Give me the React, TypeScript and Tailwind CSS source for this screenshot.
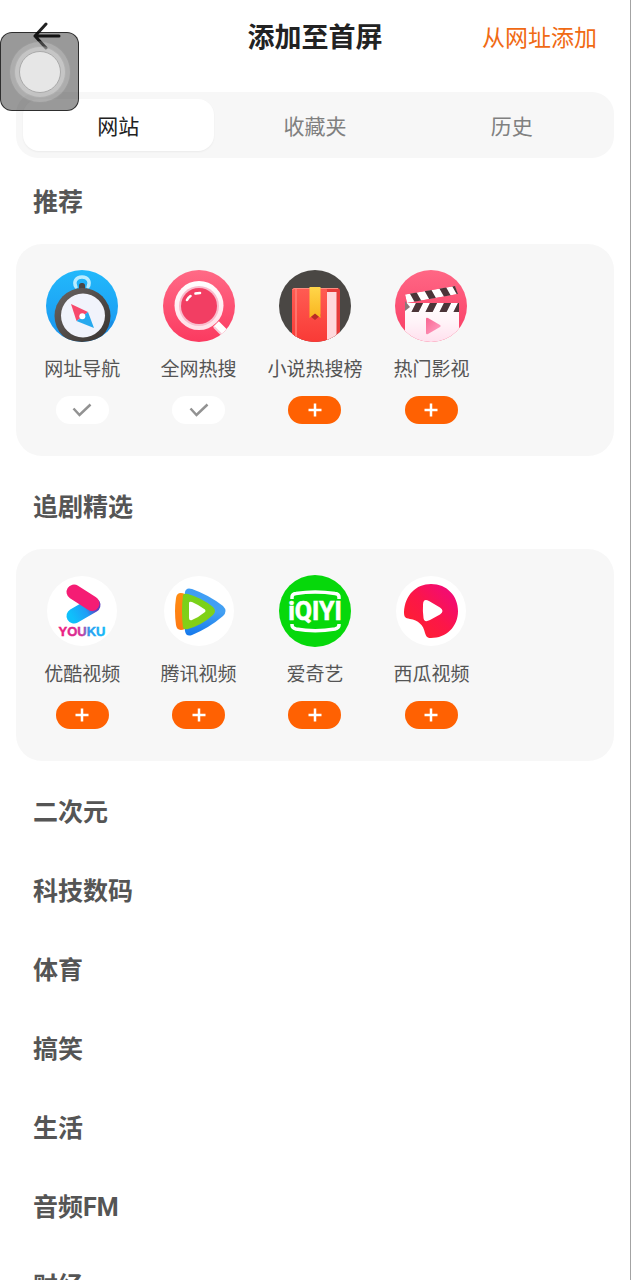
import { useState, type ReactNode } from "react";

function CompassIcon() {
  return (
    <svg viewBox="0 0 72 72" className="size-full" aria-hidden="true">
      <defs>
        <linearGradient id="compass-sky" x1="0" y1="0" x2="0" y2="1">
          <stop offset="0" stopColor="#22b9fb" />
          <stop offset="1" stopColor="#1a94f0" />
        </linearGradient>
        <linearGradient id="compass-rim" x1="0" y1="0" x2="1" y2="1">
          <stop offset="0" stopColor="#6a6462" />
          <stop offset="1" stopColor="#37322f" />
        </linearGradient>
      </defs>
      <rect width="72" height="72" fill="url(#compass-sky)" />
      <path d="M52 66L66 50L72 58V72H50Z" fill="#157fd8" opacity=".5" />
      <path d="M30 17C27 12 30 7 36 7S45 12 42 17" fill="none" stroke="#b9ecff" strokeWidth="3.4" strokeLinecap="round" />
      <rect x="33" y="13" width="6" height="8" rx="2.5" fill="#4b4644" />
      <circle cx="36.5" cy="46" r="28" fill="url(#compass-rim)" />
      <circle cx="37" cy="45.5" r="22" fill="#f1f3fb" />
      <path d="M25 34L42 42L36.500 46.500L30.500 51Z" fill="#f7496c" />
      <path d="M48 58L42 42L36.500 46.500L30.500 51Z" fill="#27a9ee" />
      <circle cx="36.300" cy="46.300" r="3" fill="#fff" />
    </svg>
  );
}

function MagnifierIcon() {
  return (
    <svg viewBox="0 0 72 72" className="size-full" aria-hidden="true">
      <defs>
        <linearGradient id="lens-back" x1="0" y1="0" x2="0" y2="1">
          <stop offset="0" stopColor="#ff6a86" />
          <stop offset="1" stopColor="#fb3a60" />
        </linearGradient>
        <linearGradient id="lens-rim" x1="0" y1="0" x2="0" y2="1">
          <stop offset="0" stopColor="#fff" />
          <stop offset="1" stopColor="#ffdfe8" />
        </linearGradient>
      </defs>
      <rect width="72" height="72" fill="url(#lens-back)" />
      <path d="M53 54L65 66" stroke="#fff" strokeWidth="8" />
      <path d="M51 57L60 66" stroke="#f8cbd8" strokeWidth="2" />
      <circle cx="36" cy="35.500" r="24.500" fill="url(#lens-rim)" />
      <circle cx="36" cy="36" r="20" fill="#f9bccd" />
      <circle cx="36" cy="36" r="18" fill="#f23e63" />
      <path d="M24 30C25 28 26 27 27.500 26M32.500 23.500C34 23 35.500 23 37 23" fill="none" stroke="#fff" strokeWidth="2.600" strokeLinecap="round" />
    </svg>
  );
}

function BookIcon() {
  return (
    <svg viewBox="0 0 72 72" className="size-full" aria-hidden="true">
      <defs>
        <linearGradient id="book-cover" x1="0" y1="0" x2="0" y2="1">
          <stop offset="0" stopColor="#ff5c53" />
          <stop offset="1" stopColor="#f93a36" />
        </linearGradient>
        <linearGradient id="book-mark" x1="0" y1="0" x2="0" y2="1">
          <stop offset="0" stopColor="#ffd64a" />
          <stop offset="1" stopColor="#f9b51f" />
        </linearGradient>
      </defs>
      <rect width="72" height="72" fill="#4a4744" />
      <rect x="13" y="18" width="48" height="60" rx="3" fill="#e63c3a" />
      <rect x="48" y="22" width="9.500" height="52" fill="#ffd9dc" />
      <path d="M16 18H46Q48 18 48 20V72H13V21Q13 18 16 18Z" fill="url(#book-cover)" />
      <path d="M17 19V72" stroke="#ff8279" strokeWidth="1.500" />
      <path d="M13.500 20Q14 18.500 16 18.500H59" fill="none" stroke="#ff8c80" />
      <path d="M31 46L36 50L42 45L37 42Z" fill="#b92c25" />
      <path d="M30.500 17H41.500V48L36 43.500L30.500 48Z" fill="url(#book-mark)" />
    </svg>
  );
}

function ClapperIcon() {
  return (
    <svg viewBox="0 0 72 72" className="size-full" aria-hidden="true">
      <defs>
        <linearGradient id="clap-back" x1="0" y1="0" x2="0" y2="1">
          <stop offset="0" stopColor="#ff6785" />
          <stop offset="1" stopColor="#f93c63" />
        </linearGradient>
        <linearGradient id="clap-board" x1="0" y1="0" x2="0" y2="1">
          <stop offset="0" stopColor="#fff" />
          <stop offset=".5" stopColor="#fff3f8" />
          <stop offset="1" stopColor="#ffe0ee" />
        </linearGradient>
        <linearGradient id="clap-play" x1="0" y1="0" x2="1" y2="1">
          <stop offset="0" stopColor="#f96591" />
          <stop offset="1" stopColor="#ffa2c5" />
        </linearGradient>
        <clipPath id="clap-arm"><path d="M10 24.500L60 16L63 24L12 33Z" /></clipPath>
        <clipPath id="clap-strip"><path d="M10 33H64V42H10Z" /></clipPath>
      </defs>
      <rect width="72" height="72" fill="url(#clap-back)" />
      <path d="M10 33H64V72H10Z" fill="url(#clap-board)" />
      <g clipPath="url(#clap-arm)">
        <path d="M10 24.500L60 16L63 24L12 33Z" fill="#fff" />
        <path d="M16 19L25 35M30.500 16L39.500 32M45 13L54 29M58 11L67 27" stroke="#4b3438" strokeWidth="6.500" />
      </g>
      <g clipPath="url(#clap-strip)">
        <path d="M18 46L26 30M32 46L40 30M46 46L54 30M60 46L68 30" stroke="#4b3438" strokeWidth="6.500" />
      </g>
      <path d="M10 34V31L15 37L10 41Z" fill="#8b7779" />
      <path d="M31 49Q31 47 33 48L45 55Q46.500 56 45 57L33 64Q31 65 31 63Z" fill="url(#clap-play)" />
    </svg>
  );
}

function YoukuIcon() {
  return (
    <svg viewBox="0 0 72 72" className="size-full" aria-hidden="true">
      <defs>
        <linearGradient id="youku-blue" gradientUnits="userSpaceOnUse" x1="26" y1="42" x2="48" y2="30">
          <stop offset="0" stopColor="#0fc0fb" />
          <stop offset=".6" stopColor="#1f9df5" />
          <stop offset="1" stopColor="#5b3fc0" />
        </linearGradient>
        <linearGradient id="youku-word" x1="0" y1="0" x2="1" y2="0">
          <stop offset="0" stopColor="#f01c7d" />
          <stop offset=".5" stopColor="#d0339c" />
          <stop offset=".66" stopColor="#2b9df0" />
          <stop offset="1" stopColor="#14b8f7" />
        </linearGradient>
      </defs>
      <circle cx="36" cy="36" r="35" fill="#fff" />
      <path d="M28 41L47 30" stroke="url(#youku-blue)" strokeWidth="15" strokeLinecap="round" />
      <path d="M28 17L46 28.500" stroke="#f51c74" strokeWidth="15" strokeLinecap="round" />
      <text x="36" y="61" textAnchor="middle" fontFamily="'Liberation Sans', sans-serif" fontWeight="700" fontSize="13" fill="url(#youku-word)" stroke="url(#youku-word)" strokeWidth=".4">YOUKU</text>
    </svg>
  );
}

function TencentIcon() {
  return (
    <svg viewBox="0 0 72 72" className="size-full" aria-hidden="true">
      <defs>
        <linearGradient id="tx-blue" x1="0" y1="0" x2="0" y2="1">
          <stop offset="0" stopColor="#3f9df5" />
          <stop offset=".5" stopColor="#43a0f2" />
          <stop offset="1" stopColor="#1478ec" />
        </linearGradient>
        <linearGradient id="tx-green" x1="0" y1="0" x2="0" y2="1">
          <stop offset="0" stopColor="#76d21b" />
          <stop offset="1" stopColor="#86cf16" />
        </linearGradient>
        <linearGradient id="tx-orange" x1="0" y1="0" x2="0" y2="1">
          <stop offset="0" stopColor="#ff8d12" />
          <stop offset="1" stopColor="#ff7912" />
        </linearGradient>
      </defs>
      <circle cx="36" cy="36" r="35" fill="#fff" />
      <path d="M22 17Q23 12 29 14Q46 20 60 31Q65 36 60 41Q46 53 29 60Q23 62 22 56Q19 36 22 17Z" fill="url(#tx-blue)" />
      <path d="M22 19Q14 16 13 23Q11 36 13 50Q14 57 22 54Z" fill="url(#tx-orange)" />
      <path d="M20 20Q22 18 25 19Q39 23 50 32Q54 36 50 40Q39 50 25 54Q22 55 20 53Q18 36 20 20Z" fill="url(#tx-green)" />
      <path d="M26 28Q26 26 29 27Q36 30 42 34.500Q43 36 42 37Q36 42 29 45Q26 46 26 43Z" fill="#fff" />
    </svg>
  );
}

function IqiyiIcon() {
  return (
    <svg viewBox="0 0 72 72" className="size-full" aria-hidden="true">
      <rect width="72" height="72" fill="#06d80b" />
      <path d="M13 24V22Q13 19 17 18.500Q36 15.500 56 18.500Q60 19 60 22V24M13 49V50Q13 53 17 54Q36 57.500 56 54Q60 53 60 50V49" fill="none" stroke="#fff" strokeWidth="3.500" />
      <text x="36" y="45" textAnchor="middle" fontFamily="Roboto, sans-serif" fontWeight="700" fontSize="25" fill="#fff" stroke="#fff" strokeWidth=".6">iQIYI</text>
    </svg>
  );
}

function XiguaIcon() {
  return (
    <svg viewBox="0 0 72 72" className="size-full" aria-hidden="true">
      <defs>
        <linearGradient id="xigua" x1="0" y1="1" x2="1" y2="0">
          <stop offset="0" stopColor="#ff2328" />
          <stop offset=".5" stopColor="#fc1648" />
          <stop offset="1" stopColor="#ee0785" />
        </linearGradient>
      </defs>
      <circle cx="36" cy="36" r="35" fill="#fff" />
      <path d="M9 37C10 20 21 9 36 9C52 9 63 21 63 36C63 52 51 63 36 63C32 63 31 61 30 58C28.500 50 23 45 15 44C10 43 9 42 9 37Z" fill="url(#xigua)" />
      <path d="M28 30Q28 23 34 26L45 32.500Q50 36 45 39.500L35 45Q29 48 28.500 43Q27.500 36 28 30Z" fill="#fff" />
    </svg>
  );
}

type Site = { name: string; icon: ReactNode; added?: boolean };

const recommended: Site[] = [
  { name: "网址导航", icon: <CompassIcon />, added: true },
  { name: "全网热搜", icon: <MagnifierIcon />, added: true },
  { name: "小说热搜榜", icon: <BookIcon /> },
  { name: "热门影视", icon: <ClapperIcon /> },
];

const shows: Site[] = [
  { name: "优酷视频", icon: <YoukuIcon /> },
  { name: "腾讯视频", icon: <TencentIcon /> },
  { name: "爱奇艺", icon: <IqiyiIcon /> },
  { name: "西瓜视频", icon: <XiguaIcon /> },
];

const categories = ["二次元", "科技数码", "体育", "搞笑", "生活", "音频FM", "财经"];
const tabs = ["网站", "收藏夹", "历史"];

function SiteItem({ site }: { site: Site }) {
  const [added, setAdded] = useState(Boolean(site.added));
  return (
    <li className="flex flex-col items-center">
      <div className="size-18 overflow-hidden rounded-full">{site.icon}</div>
      <span className="mt-3 text-[19px] leading-7 whitespace-nowrap text-[#555]">{site.name}</span>
      <button
        type="button"
        aria-label={added ? `移除${site.name}` : `添加${site.name}`}
        onClick={() => setAdded(!added)}
        className={`mt-3.5 flex h-7 w-[53px] items-center justify-center rounded-full ${added ? "bg-white text-[#929292]" : "bg-[#ff6102] text-white"}`}
      >
        <svg viewBox="0 0 20 20" className="size-5" fill="none" stroke="currentColor" strokeWidth="2.500" aria-hidden="true">
          {added ? <path d="M1.500 8.500L7.500 15L18.500 4.500" /> : <path d="M3.500 10H16.500M10 3.500V16.500" />}
        </svg>
      </button>
    </li>
  );
}

function SectionTitle({ children }: { children: ReactNode }) {
  return (
    <h2 className="flex h-[79px] items-center pt-0.5 pl-[33px] font-[Roboto,'Noto_Sans_CJK_SC',sans-serif] text-[25px] font-bold text-[#555]">
      {children}
    </h2>
  );
}

function SiteSection({ title, sites }: { title: string; sites: Site[] }) {
  return (
    <section className="pb-[11px]">
      <SectionTitle>{title}</SectionTitle>
      <ul className="mx-4 mt-[3px] grid grid-cols-5 rounded-[26px] bg-[#f7f7f7] px-2 pt-[26px] pb-8">
        {sites.map((site) => (
          <SiteItem key={site.name} site={site} />
        ))}
      </ul>
    </section>
  );
}

export default function App() {
  const [tab, setTab] = useState("网站");
  return (
    <div className="relative flex h-dvh flex-col border-r border-[#a3a3a3] bg-white font-['Noto_Sans_CJK_SC',sans-serif]">
      <header className="grid h-18 shrink-0 grid-cols-3 items-center px-[33px]">
        <button type="button" aria-label="返回" className="w-7 text-[#222]">
          <svg viewBox="0 0 28 28" className="size-7" fill="none" stroke="currentColor" strokeWidth="3" strokeLinecap="round" strokeLinejoin="round" aria-hidden="true">
            <path d="M13 2L2 14L13 26M2 14H26" />
          </svg>
        </button>
        <h1 className="text-center text-[27px] font-bold whitespace-nowrap text-[#222]">添加至首屏</h1>
        <a href="#add" className="justify-self-end text-[23px] whitespace-nowrap text-[#f06a14]">从网址添加</a>
      </header>

      <div role="tablist" className="mx-4 mt-5 mb-1 grid h-[66px] shrink-0 grid-cols-3 gap-1.5 rounded-[22px] bg-[#f7f7f7] p-[7px]">
        {tabs.map((name) => (
          <button
            key={name}
            type="button"
            role="tab"
            aria-selected={tab === name}
            onClick={() => setTab(name)}
            className={`rounded-2xl pt-0.5 text-[21px] ${tab === name ? "bg-white text-[#222] shadow-xs" : "text-[#808080]"}`}
          >
            {name}
          </button>
        ))}
      </div>

      <main className="min-h-0 flex-1 overflow-y-auto [scrollbar-width:none]">
        <SiteSection title="推荐" sites={recommended} />
        <SiteSection title="追剧精选" sites={shows} />
        {categories.map((name) => (
          <SectionTitle key={name}>{name}</SectionTitle>
        ))}
      </main>

      <button
        type="button"
        aria-label="辅助触控"
        className="absolute top-8 left-0 flex size-[79px] items-center justify-center rounded-xl border border-black/70 bg-black/40"
      >
        <span className="flex size-[62px] items-center justify-center rounded-full border border-black/10 bg-white/20">
          <span className="flex size-[52px] items-center justify-center rounded-full border border-black/10 bg-white/30">
            <span className="size-[42px] rounded-full border border-[#aaa] bg-[#e6e6e6]" />
          </span>
        </span>
      </button>
    </div>
  );
}
